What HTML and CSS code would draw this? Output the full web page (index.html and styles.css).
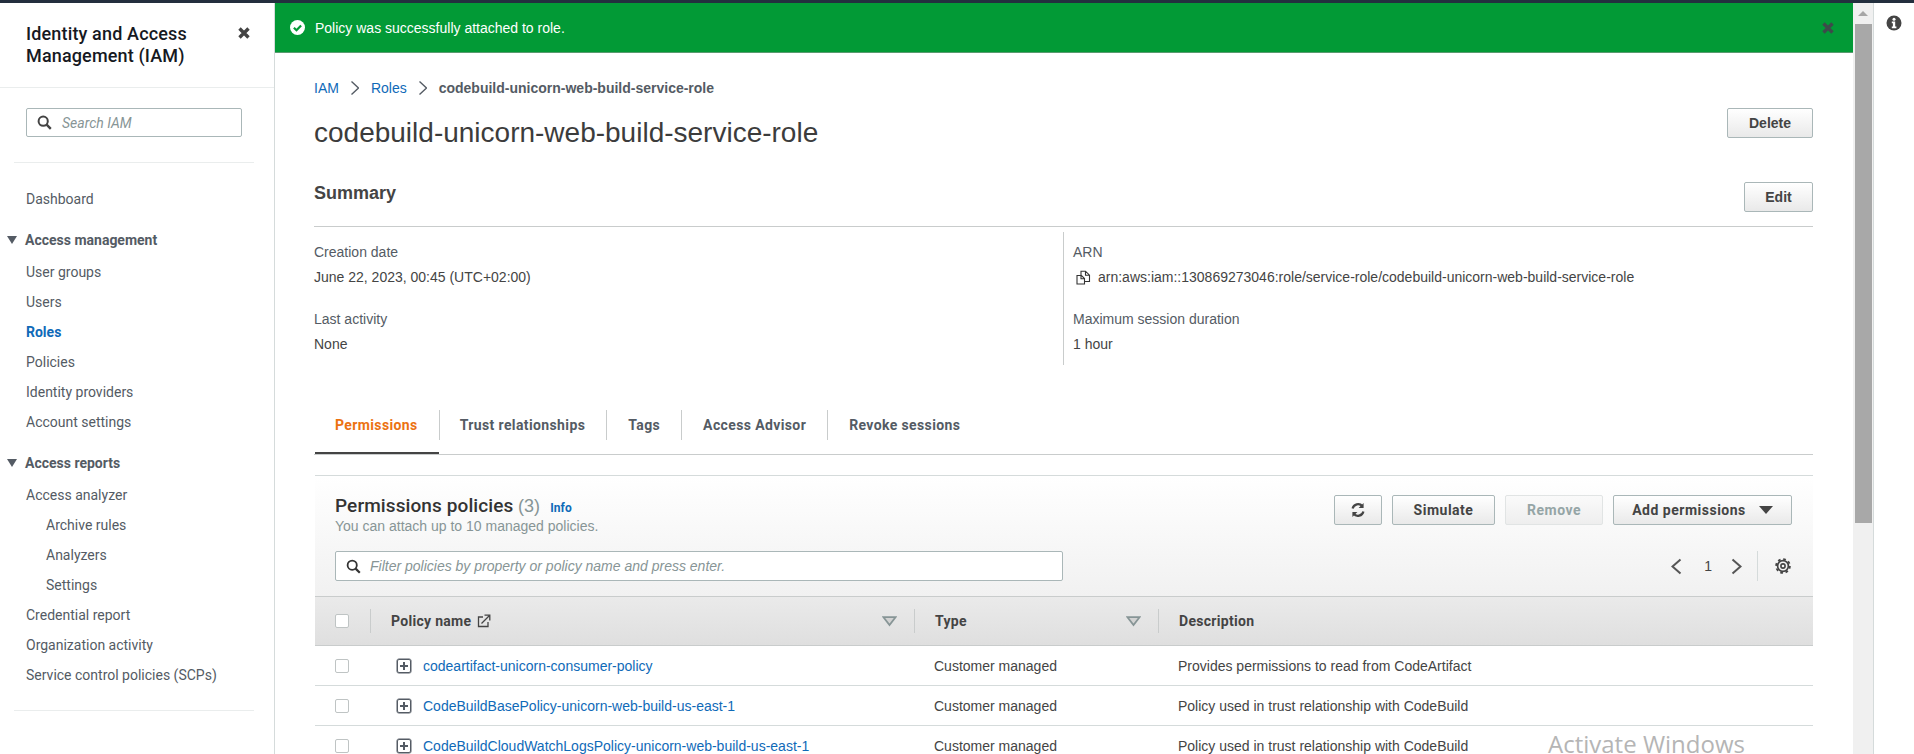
FILE: index.html
```html
<!DOCTYPE html>
<html lang="en">
<head>
    <meta charset="UTF-8">
    <title>codebuild-unicorn-web-build-service-role - IAM</title>
    <link rel="stylesheet" href="styles.css">
</head>
<body>
    <div class="topbar"></div>
    <div class="app">
        <nav class="sidebar">
            <div class="side-head">
                <h2>Identity and Access Management (IAM)</h2>
                <svg class="side-close" width="14" height="14" viewBox="0 0 14 14"><path d="M2.5 2.5l9 9M11.5 2.5l-9 9" stroke="#444" stroke-width="3.4" fill="none"/></svg>
            </div>
            <div class="side-search">
                <svg width="15" height="15" viewBox="0 0 15 15"><circle cx="6.2" cy="6.2" r="4.6" fill="none" stroke="#444" stroke-width="2"/><path d="M9.6 9.6l4.2 4.2" stroke="#444" stroke-width="2.4"/></svg>
                <span>Search IAM</span>
            </div>
            <div class="side-rule"></div>
            <a class="side-link side-dash">Dashboard</a>
            <div class="side-group"><i class="tri"></i>Access management</div>
            <a class="side-link">User groups</a>
            <a class="side-link">Users</a>
            <a class="side-link active">Roles</a>
            <a class="side-link">Policies</a>
            <a class="side-link">Identity providers</a>
            <a class="side-link">Account settings</a>
            <div class="side-group"><i class="tri"></i>Access reports</div>
            <a class="side-link">Access analyzer</a>
            <a class="side-link sub">Archive rules</a>
            <a class="side-link sub">Analyzers</a>
            <a class="side-link sub">Settings</a>
            <a class="side-link">Credential report</a>
            <a class="side-link">Organization activity</a>
            <a class="side-link">Service control policies (SCPs)</a>
            <div class="side-rule last"></div>
        </nav>

        <div class="content">
            <div class="flash">
                <svg width="15" height="15" viewBox="0 0 15 15"><circle cx="7.5" cy="7.5" r="7.5" fill="#fff"/><path d="M3.9 7.7l2.6 2.6 4.6-4.8" stroke="#029a36" stroke-width="2.2" fill="none"/></svg>
                <span class="flash-text">Policy was successfully attached to role.</span>
                <svg class="flash-close" width="14" height="14" viewBox="0 0 14 14"><path d="M2.5 2.5l9 9M11.5 2.5l-9 9" stroke="#3d4a4a" stroke-width="3.4" fill="none"/></svg>
            </div>
            <main>
                <div class="crumbs">
                    <a>IAM</a>
                    <svg width="8" height="16" viewBox="0 0 8 16"><path d="M.5 1.5l7 6.500-7 6.500" stroke="#545b64" stroke-width="1.4" fill="none"/></svg>
                    <a>Roles</a>
                    <svg width="8" height="16" viewBox="0 0 8 16"><path d="M.5 1.500l7 6.500-7 6.500" stroke="#545b64" stroke-width="1.4" fill="none"/></svg>
                    <b>codebuild-unicorn-web-build-service-role</b>
                </div>
                <div class="title-row">
                    <h1>codebuild-unicorn-web-build-service-role</h1>
                    <button class="btn delete">Delete</button>
                </div>
                <div class="summary-row">
                    <h3>Summary</h3>
                    <button class="btn edit">Edit</button>
                </div>
                <div class="summary">
                    <div class="sum-col">
                        <div class="sum-label">Creation date</div>
                        <div class="sum-value">June 22, 2023, 00:45 (UTC+02:00)</div>
                        <div class="sum-label gap">Last activity</div>
                        <div class="sum-value">None</div>
                    </div>
                    <div class="sum-col right">
                        <div class="sum-label">ARN</div>
                        <div class="sum-value arn">
                            <svg width="15" height="15" viewBox="0 0 15 15"><path d="M1 5.500h4.500l3 3v5.500H1zM5 5.500v3.300h3.500M5 5V1.200h4.500l4 4v6.300H8.500M9.500 1.200v4h4" stroke="#333" stroke-width="1.100" fill="none"/></svg>
                            arn:aws:iam::130869273046:role/service-role/codebuild-unicorn-web-build-service-role
                        </div>
                        <div class="sum-label gap">Maximum session duration</div>
                        <div class="sum-value">1 hour</div>
                    </div>
                </div>

                <div class="tabs">
                    <div class="tab active"><span>Permissions</span></div>
                    <div class="tab"><span>Trust relationships</span></div>
                    <div class="tab"><span>Tags</span></div>
                    <div class="tab"><span>Access Advisor</span></div>
                    <div class="tab last"><span>Revoke sessions</span></div>
                </div>

                <section class="panel">
                    <div class="panel-top">
                        <div class="panel-title">
                            <div class="panel-h"><b>Permissions policies</b> <span class="count">(3)</span> <a class="info">Info</a></div>
                            <div class="panel-sub">You can attach up to 10 managed policies.</div>
                        </div>
                        <div class="panel-actions">
                            <button class="btn small icon">
                                <svg width="16" height="16" viewBox="0 0 16 16"><path d="M2.6 6.6A5.6 5.6 0 0 1 12.4 4.2M13.4 9.4A5.6 5.6 0 0 1 3.6 11.8" stroke="#444" stroke-width="2.2" fill="none"/><path d="M13.6 1v5h-5zM2.4 15v-5h5z" fill="#444"/></svg>
                            </button>
                            <button class="btn small simulate">Simulate</button>
                            <button class="btn small remove">Remove</button>
                            <button class="btn small add">Add permissions<i class="tri big"></i></button>
                        </div>
                    </div>
                    <div class="filter-row">
                        <div class="filter">
                            <svg width="15" height="15" viewBox="0 0 15 15"><circle cx="6.2" cy="6.2" r="4.6" fill="none" stroke="#333" stroke-width="1.8"/><path d="M9.6 9.6l4.2 4.2" stroke="#333" stroke-width="2.2"/></svg>
                            <span>Filter policies by property or policy name and press enter.</span>
                        </div>
                        <div class="pager">
                            <svg width="11" height="17" viewBox="0 0 11 17"><path d="M9.500 1.500l-8 7 8 7" stroke="#555" stroke-width="2" fill="none"/></svg>
                            <span>1</span>
                            <svg width="11" height="17" viewBox="0 0 11 17"><path d="M1.500 1.500l8 7-8 7" stroke="#555" stroke-width="2" fill="none"/></svg>
                            <i class="pager-rule"></i>
                            <svg class="gear" width="16" height="16" viewBox="0 0 16 16"><circle cx="8" cy="8" r="5.400" stroke="#444" stroke-width="1.700" fill="none"/><circle cx="8" cy="8" r="6.900" stroke="#444" stroke-width="1.800" stroke-dasharray="2.710 2.710" fill="none"/><circle cx="8" cy="8" r="2.100" stroke="#444" stroke-width="1.600" fill="none"/></svg>
                        </div>
                    </div>
                    <div class="grid thead">
                        <div class="cell check"><i class="box"></i></div>
                        <div class="cell">Policy name
                            <svg class="ext" width="14" height="14" viewBox="0 0 14 14"><path d="M11 8v4.500H1.500V3H6" stroke="#444" stroke-width="1.300" fill="none"/><path d="M4.500 9.500L12 2M7.500 1.200h5.300v5.300" stroke="#444" stroke-width="1.300" fill="none"/></svg>
                            <svg class="sort" width="15" height="11" viewBox="0 0 15 11"><path d="M1.500 1.200h12L7.500 9z" stroke="#879596" stroke-width="1.800" fill="#d3d3d3"/></svg>
                        </div>
                        <div class="cell">Type<svg class="sort" width="15" height="11" viewBox="0 0 15 11"><path d="M1.500 1.200h12L7.500 9z" stroke="#879596" stroke-width="1.800" fill="#d3d3d3"/></svg></div>
                        <div class="cell">Description</div>
                    </div>
                    <div class="grid row">
                        <div class="check"><i class="box"></i></div>
                        <div class="name"><i class="plus"></i><a>codeartifact-unicorn-consumer-policy</a></div>
                        <div>Customer managed</div>
                        <div>Provides permissions to read from CodeArtifact</div>
                    </div>
                    <div class="grid row">
                        <div class="check"><i class="box"></i></div>
                        <div class="name"><i class="plus"></i><a>CodeBuildBasePolicy-unicorn-web-build-us-east-1</a></div>
                        <div>Customer managed</div>
                        <div>Policy used in trust relationship with CodeBuild</div>
                    </div>
                    <div class="grid row">
                        <div class="check"><i class="box"></i></div>
                        <div class="name"><i class="plus"></i><a>CodeBuildCloudWatchLogsPolicy-unicorn-web-build-us-east-1</a></div>
                        <div>Customer managed</div>
                        <div>Policy used in trust relationship with CodeBuild</div>
                    </div>
                </section>
            </main>
        </div>

        <div class="scrollbar">
            <i class="arrow"></i>
            <div class="thumb"></div>
        </div>
        <aside class="helpbar">
            <svg width="16" height="16" viewBox="0 0 16 16"><circle cx="8" cy="8" r="7.500" fill="#444"/><circle cx="8" cy="4.200" r="1.500" fill="#fff"/><path d="M5.800 6.600h3.400v5h1.200v1.600H5.800v-1.600h1.100V8.200H5.800z" fill="#fff"/></svg>
        </aside>
    </div>
    <div class="watermark">Activate Windows</div>
</body>
</html>
```

FILE: styles.css
```css
html, body {
    height: 100%;
}

body {
    margin: 0;
    overflow: hidden;
    display: flex;
    flex-direction: column;
    font-family: "Liberation Sans", Arial, sans-serif;
    font-size: 14px;
    color: #444;
    background: #fff;
}

a {
    color: #0f6ab8;
    text-decoration: none;
}

i {
    display: block;
}

.topbar {
    height: 3px;
    flex: none;
    background: #232f3e;
}

.app {
    flex: 1;
    min-height: 0;
    display: flex;
}

/* left nav */
.sidebar {
    width: 274px;
    flex: none;
    border-right: 1px solid #d5dbdb;
    font-family: Roboto, sans-serif;
    color: #545b64;
}

.side-head {
    height: 85px;
    box-sizing: border-box;
    padding: 20px 23px 0 26px;
    display: flex;
    justify-content: space-between;
    border-bottom: 1px solid #eaeded;
}

.side-head h2 {
    margin: 0;
    width: 190px;
    font-size: 18px;
    line-height: 22px;
    font-weight: 500;
    letter-spacing: .15px;
    color: #16191f;
}

.side-close {
    margin-top: 3px;
}

.side-search {
    margin: 20px 32px 0 26px;
    height: 29px;
    box-sizing: border-box;
    border: 1px solid #aab7b8;
    border-radius: 2px;
    display: flex;
    align-items: center;
    gap: 10px;
    padding-left: 10px;
    font-style: italic;
    color: #879596;
}

.side-rule {
    margin: 25px 20px 0 14px;
    border-top: 1px solid #eaeded;
}

.side-rule.last {
    margin-top: 20px;
}

.side-link {
    display: block;
    height: 30px;
    line-height: 30px;
    padding-left: 26px;
    color: #545b64;
}

.side-link.side-dash {
    margin-top: 21px;
}

.side-link.sub {
    padding-left: 46px;
}

.side-link.active {
    color: #0f6ab8;
    font-weight: 700;
}

.side-group {
    margin-top: 11px;
    height: 30px;
    margin-bottom: 2px;
    line-height: 30px;
    padding-left: 7px;
    display: flex;
    align-items: center;
    gap: 8px;
    font-weight: 700;
}

.tri {
    width: 0;
    height: 0;
    border-left: 5.5px solid transparent;
    border-right: 5.500px solid transparent;
    border-top: 8px solid #545b64;
}

.tri.big {
    border-left-width: 7px;
    border-right-width: 7px;
    border-top-width: 8px;
    border-top-color: #444;
    margin-left: 13px;
}

/* main column */
.content {
    flex: 1;
    min-width: 0;
}

.flash {
    height: 50px;
    box-sizing: border-box;
    background: #029a36;
    border-bottom: 1px solid #5a9a70;
    display: flex;
    align-items: center;
    padding: 0 18px 0 15px;
    color: #fff;
}

.flash-text {
    margin-left: 10px;
    flex: 1;
}

main {
    padding: 0 40px 0 39px;
}

.crumbs {
    margin-top: 26px;
    height: 18px;
    display: flex;
    align-items: center;
    gap: 12px;
}

.crumbs b {
    color: #545b64;
}

.title-row {
    margin-top: 6px;
    display: flex;
    justify-content: space-between;
    align-items: flex-start;
}

h1 {
    margin: 14px 0 0;
    font-size: 28px;
    line-height: 32px;
    font-weight: 400;
    color: #3c3c3c;
}

.btn {
    height: 30px;
    box-sizing: border-box;
    border: 1px solid #aab7b8;
    border-radius: 2px;
    background: linear-gradient(#fff, #e9e9e9);
    color: #444;
    font-family: "Liberation Sans", Arial, sans-serif;
    font-size: 14px;
    font-weight: 700;
    padding: 0;
}

.delete {
    width: 86px;
    margin-top: 5px;
}

.edit {
    width: 69px;
}

.summary-row {
    margin-top: 33px;
    height: 44px;
    display: flex;
    justify-content: space-between;
    border-bottom: 1px solid #c9cccc;
}

h3 {
    margin: 0;
    font-size: 18px;
    line-height: 22px;
    color: #444;
}

.summary {
    margin-top: 5px;
    display: flex;
    height: 133px;
}

.sum-col {
    width: 749px;
    flex: none;
    padding-top: 11px;
}

.sum-col.right {
    flex: 1;
    border-left: 1px solid #c9cccc;
    padding-left: 9px;
}

.sum-label {
    height: 18px;
    line-height: 18px;
    color: #545b64;
}

.sum-label.gap {
    margin-top: 24px;
}

.sum-value {
    margin-top: 7px;
    height: 18px;
    line-height: 18px;
    display: flex;
    align-items: center;
    color: #444;
}

.sum-value.arn {
    gap: 7px;
    padding-left: 3px;
}

.tabs {
    margin-top: 45px;
    height: 44px;
    display: flex;
    border-bottom: 1px solid #c9cccc;
    font-family: Roboto, sans-serif;
    font-weight: 700;
    letter-spacing: .38px;
    color: #545b64;
}

.tab {
    height: 30px;
    line-height: 30px;
    padding: 0 21px;
    border-right: 1px solid #c9cccc;
}

.tab.last {
    border-right: 0;
}

.tab.active {
    height: 44px;
    margin-left: 1px;
    padding-left: 20px;
    color: #ec7211;
    border-right: 0;
    box-shadow: inset 0 -2px 0 #444;
    position: relative;
}

.tab.active::after {
    content: "";
    position: absolute;
    right: -1px;
    top: 0;
    height: 30px;
    border-right: 1px solid #c9cccc;
}

/* permissions table */
.panel {
    margin: 20px 0 0 1px;
    border-top: 1px solid #d5dbdb;
    background: linear-gradient(#fff 0, #f1f1f1 120px);
}

.panel-top {
    padding: 19px 21px 0 20px;
    display: flex;
    justify-content: space-between;
}

.panel-h {
    height: 22px;
    line-height: 22px;
    font-family: Roboto, sans-serif;
    font-size: 18px;
    white-space: nowrap;
}

.panel-h b {
    font-weight: 500;
    font-size: 19px;
    letter-spacing: .1px;
    color: #333;
}

.count {
    color: #879596;
    font-family: "Liberation Sans", sans-serif;
    font-weight: 400;
}

.info {
    margin-left: 6px;
    font-size: 12px;
    font-weight: 700;
}

.panel-sub {
    margin-top: 1px;
    color: #879596;
}

.panel-actions {
    display: flex;
    gap: 10px;
    font-family: Roboto, sans-serif;
}

.btn.small {
    font-family: Roboto, sans-serif;
    letter-spacing: .5px;
}

.icon {
    width: 48px;
    padding-top: 3px;
}

.simulate {
    width: 103px;
}

.remove {
    width: 98px;
    color: #95a5a6;
    border-color: #e1e4e4;
    background: linear-gradient(#fafafa, #eeeeee);
}

.add {
    width: 179px;
    display: flex;
    align-items: center;
    justify-content: center;
    letter-spacing: .7px;
}

.filter-row {
    margin-top: 17px;
    padding: 0 21px 0 20px;
    display: flex;
    justify-content: space-between;
    align-items: center;
}

.filter {
    width: 728px;
    height: 30px;
    box-sizing: border-box;
    background: #fff;
    border: 1px solid #aab7b8;
    border-radius: 2px;
    display: flex;
    align-items: center;
    gap: 9px;
    padding-left: 10px;
    font-style: italic;
    color: #879596;
}

.pager {
    display: flex;
    align-items: center;
    height: 30px;
    color: #444;
}

.pager span {
    margin: 0 19px 0 22px;
}

.pager-rule {
    height: 30px;
    margin: 0 17px 0 15px;
    border-left: 1px solid #d5dbdb;
}

.gear {
    margin-right: 1px;
}

.grid {
    display: grid;
    grid-template-columns: 55px 544px 244px 1fr;
    align-items: center;
}

.thead {
    margin-top: 15px;
    height: 50px;
    box-sizing: border-box;
    border-top: 1px solid #c9cccc;
    border-bottom: 1px solid #c9cccc;
    background: linear-gradient(#eaeaea, #dfdfdf);
    font-family: Roboto, sans-serif;
    font-weight: 700;
    letter-spacing: .3px;
}

.cell {
    height: 24px;
    line-height: 24px;
    padding: 0 17px 0 20px;
    display: flex;
    align-items: center;
    border-left: 1px solid #c9cccc;
}

.cell.check {
    border-left: 0;
    padding: 0 0 0 20px;
}

.check {
    padding-left: 20px;
}

.ext {
    margin-left: 6px;
}

.sort {
    margin-left: auto;
}

.box {
    width: 12px;
    height: 12px;
    border: 1px solid #bfc4c4;
    border-radius: 2px;
    background: #fff;
}

.row {
    height: 40px;
    box-sizing: border-box;
    border-bottom: 1px solid #d5dbdb;
    background: #fff;
}

.row > div:nth-child(n+3) {
    padding-left: 20px;
}

.name {
    display: flex;
    align-items: center;
    gap: 12px;
    padding-left: 27px;
}

.plus {
    width: 12px;
    height: 12px;
    border: 1px solid #545b64;
    box-shadow: 0 0 0 .5px #545b64;
    border-radius: 2px;
    background:
        linear-gradient(#545b64, #545b64) center / 8px 2px no-repeat,
        linear-gradient(#545b64, #545b64) center / 2px 8px no-repeat;
}

/* browser chrome on the right */
.scrollbar {
    width: 20px;
    flex: none;
    background: #f0f0f0;
    border-right: 1px solid #d5dbdb;
    position: relative;
}

.arrow {
    position: absolute;
    left: 5px;
    top: 8px;
    width: 0;
    height: 0;
    border-left: 5px solid transparent;
    border-right: 5px solid transparent;
    border-bottom: 5px solid #a6a6a6;
}

.thumb {
    position: absolute;
    top: 21px;
    left: 2px;
    right: 1px;
    height: 499px;
    background: #a8a8a8;
}

.helpbar {
    width: 40px;
    flex: none;
    padding-top: 12px;
    text-align: center;
}

.watermark {
    position: absolute;
    left: 1548px;
    top: 728px;
    font-family: "Open Sans", sans-serif;
    font-size: 24px;
    line-height: 32px;
    color: #b5b5b5;
}
```
